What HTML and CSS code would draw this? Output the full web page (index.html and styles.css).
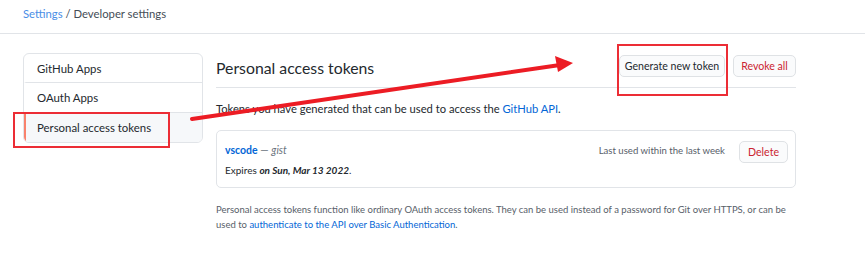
FILE: index.html
```html
<!DOCTYPE html>
<html lang="en">
<head>
    <meta charset="UTF-8">
    <title>Personal access tokens</title>
    <link rel="stylesheet" href="styles.css">
</head>
<body>
    <div class="breadcrumb">
        <a href="#">Settings</a> / Developer settings
    </div>
    <div class="layout">
        <nav class="menu">
            <a href="#" class="menu-item">GitHub Apps</a>
            <a href="#" class="menu-item">OAuth Apps</a>
            <a href="#" class="menu-item selected">Personal access tokens</a>
        </nav>
        <div class="main">
            <div class="subhead">
                <h2>Personal access tokens</h2>
                <div class="actions">
                    <button class="btn btn-generate">Generate new token</button>
                    <button class="btn btn-revoke danger">Revoke all</button>
                </div>
            </div>
            <p class="intro">Tokens you have generated that can be used to access the <a href="#">GitHub API</a>.</p>
            <div class="token-box">
                <div class="token-row">
                    <div>
                        <div class="token-name"><a href="#">vscode</a> — <em>gist</em></div>
                        <div class="token-exp">Expires <strong><em>on Sun, Mar 13 2022</em></strong>.</div>
                    </div>
                    <div class="token-meta">
                        <span class="last-used">Last used within the last week</span>
                        <button class="btn danger small">Delete</button>
                    </div>
                </div>
            </div>
            <p class="note">Personal access tokens function like ordinary OAuth access tokens. They can be used instead of a password for Git over HTTPS, or can be used to <a href="#">authenticate to the API over Basic Authentication</a>.</p>
        </div>
    </div>

    <!-- annotations drawn over the screenshot -->
    <div class="mark mark-menu"></div>
    <div class="mark mark-generate"></div>
    <svg class="arrow" width="865" height="254" viewBox="0 0 865 254">
        <line x1="192" y1="119" x2="560" y2="65" stroke="#ec1c24" stroke-width="4" stroke-linecap="round"/>
        <polygon points="573,63 555,56 558,72" fill="#ec1c24"/>
    </svg>
</body>
</html>
```

FILE: styles.css
```css
body {
    font-family: Lato, "Noto Sans", sans-serif;
    color: #24292e;
    background-color: #fff;
    margin: 0;
    padding: 0;
    position: relative;
    width: 865px;
    height: 254px;
    overflow: hidden;
}
a {
    color: #0366d6;
    text-decoration: none;
}
.breadcrumb {
    height: 34px;
    box-sizing: border-box;
    padding: 7px 0 0 23px;
    font-size: 11.3px;
    color: #444d56;
    border-bottom: 1px solid #e1e4e8;
}
.breadcrumb a {
    color: #4a8ee6;
}
.layout {
    display: flex;
    gap: 13px;
    padding: 19px 0 0 23px;
}
.menu {
    width: 180px;
    height: 90px;
    box-sizing: border-box;
    border: 1px solid #e1e4e8;
    border-radius: 6px;
    display: flex;
    flex-direction: column;
    overflow: hidden;
}
.menu-item {
    height: 30px;
    box-sizing: border-box;
    padding: 8px 0 0 11px;
    font-size: 11.4px;
    color: #24292e;
    border-bottom: 1px solid #e1e4e8;
    border-left: 2px solid transparent;
}
.menu-item:last-child {
    border-bottom: none;
}
.menu-item.selected {
    background: #f6f8fa;
    border-left-color: #f9826c;
}
.main {
    width: 580px;
}
.subhead {
    display: flex;
    justify-content: space-between;
    align-items: center;
    height: 34px;
    border-bottom: 1px solid #e1e4e8;
}
.subhead h2 {
    margin: 0;
    font-size: 15.8px;
    font-weight: 400;
    padding-bottom: 6px;
}
.actions {
    display: flex;
    gap: 8px;
    padding-bottom: 8px;
}
.btn {
    font-family: inherit;
    font-size: 10.6px;
    color: #24292e;
    background: #fafbfc;
    border: 1px solid #dfe2e5;
    border-radius: 5px;
    box-sizing: border-box;
    white-space: nowrap;
    padding: 0;
    height: 22px;
    cursor: pointer;
}
.btn-generate {
    width: 106px;
}
.btn-revoke {
    width: 63px;
}
.btn.danger {
    color: #cb2431;
}
.btn.small {
    width: 49px;
}
.intro {
    font-size: 11.2px;
    margin: 14px 0 15px;
}
.token-box {
    border: 1px solid #e1e4e8;
    border-radius: 5px;
    padding: 10px 7px 11px 8px;
}
.token-row {
    display: flex;
    justify-content: space-between;
}
.token-name {
    font-size: 10.5px;
    color: #6a737d;
    margin-top: 3px;
}
.token-name a {
    font-weight: 700;
}
.token-exp {
    font-size: 10px;
    margin-top: 8px;
}
.last-used {
    font-size: 9.6px;
    color: #586069;
    margin-top: 4px;
}
.token-meta {
    display: flex;
    align-items: flex-start;
    gap: 14px;
}
.note {
    font-size: 9.5px;
    color: #586069;
    line-height: 15px;
    margin: 14px 0 0;
}
.mark {
    position: absolute;
    border: 2px solid #ec2d35;
}
.mark-menu {
    left: 13px;
    top: 112px;
    width: 153px;
    height: 32px;
}
.mark-generate {
    left: 617px;
    top: 44px;
    width: 107px;
    height: 48px;
}
.arrow {
    position: absolute;
    left: 0;
    top: 0;
}
```
